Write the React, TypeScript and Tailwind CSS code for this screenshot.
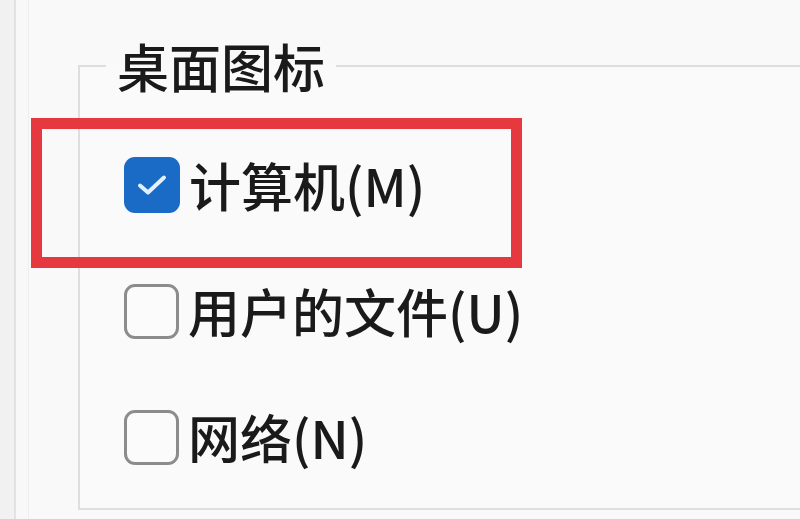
import React from "react";

const font = { fontFamily: '"Noto Sans CJK SC", "Noto Sans", sans-serif' };

function CheckBox({ checked }: { checked: boolean }) {
  if (checked) {
    return (
      <div className="w-[56px] h-[56px] rounded-[11px] bg-[#1a6bc6] flex items-center justify-center shrink-0">
        <svg width="34" height="26" viewBox="0 0 34 26" fill="none">
          <path d="M5 13.5 L13 20.5 L29 5.5" stroke="#e3f0ff" strokeWidth="4" strokeLinecap="round" strokeLinejoin="round" />
        </svg>
      </div>
    );
  }
  return <div className="w-[55px] h-[55px] rounded-[11px] border-[3px] border-[#8c8c8c] bg-[#fbfbfb] shrink-0" />;
}

function Row({ checked, label }: { checked: boolean; label: string }) {
  return (
    <div className="h-[126px] flex items-center gap-[9px] pl-[44px]">
      <CheckBox checked={checked} />
      <span className="text-[52px] leading-[52px] font-medium text-[#1a1a1a]">{label}</span>
    </div>
  );
}

export default function App() {
  return (
    <div className="w-[800px] h-[519px] bg-[#f4f4f4] relative overflow-hidden flex" style={font}>
      <div className="w-[14px] shrink-0 bg-[#f1f1f1]" />
      <div className="w-[2px] shrink-0 bg-[#e2e2e2]" />
      <div className="w-[12px] shrink-0 bg-[#f8f8f8]" />
      <div className="w-[1px] shrink-0 bg-[#eeeeee]" />
      <div className="flex-1 bg-[#f9f9f9] pl-[49px] pt-[40px]">
        <fieldset className="w-[760px] h-[470px] border-2 border-r-0 border-[#dedede] bg-[#fafafa]">
          <legend className="ml-[26px] px-[11px] text-[52px] leading-[52px] font-medium text-[#1a1a1a]">桌面图标</legend>
          <div className="pt-[30px]">
            <Row checked label="计算机(M)" />
            <Row checked={false} label="用户的文件(U)" />
            <Row checked={false} label="网络(N)" />
          </div>
        </fieldset>
      </div>
      <div className="absolute left-[31px] top-[118px] w-[491px] h-[150px] border-[11px] border-[#e6383f]" />
    </div>
  );
}
